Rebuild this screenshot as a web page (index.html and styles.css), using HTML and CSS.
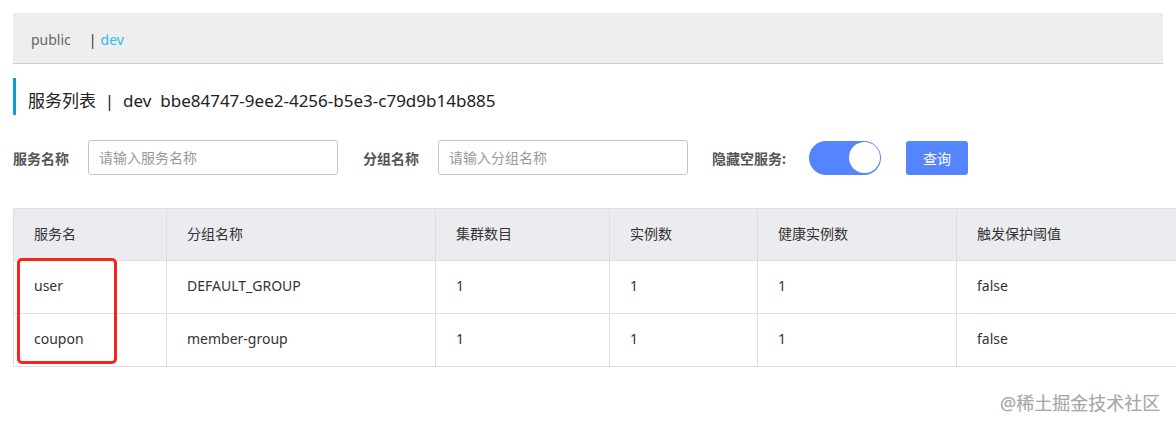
FILE: index.html
```html
<!DOCTYPE html>
<html lang="zh">
<head>
<meta charset="utf-8">
<title>服务列表</title>
<link rel="stylesheet" href="styles.css">
</head>
<body>
<div class="page">
  <div class="ns-bar">
    <span class="ns-item">public</span>
    <span class="ns-sep">|</span>
    <span class="ns-item ns-active">dev</span>
  </div>

  <h1 class="page-title">服务列表 &nbsp;| &nbsp;dev &nbsp;bbe84747-9ee2-4256-b5e3-c79d9b14b885</h1>

  <form class="filter">
    <label class="f-label">服务名称</label>
    <input class="f-input" type="text" placeholder="请输入服务名称">
    <label class="f-label f-gap">分组名称</label>
    <input class="f-input" type="text" placeholder="请输入分组名称">
    <label class="f-label f-gap f-switch-label">隐藏空服务:</label>
    <span class="switch"><span class="knob"></span></span>
    <button class="btn" type="button">查询</button>
  </form>

  <div class="table-wrap">
    <table class="grid">
      <colgroup>
        <col class="c1"><col class="c2"><col class="c3"><col class="c4"><col class="c5"><col class="c6">
      </colgroup>
      <thead>
        <tr><th>服务名</th><th>分组名称</th><th>集群数目</th><th>实例数</th><th>健康实例数</th><th>触发保护阈值</th></tr>
      </thead>
      <tbody>
        <tr><td>user</td><td>DEFAULT_GROUP</td><td>1</td><td>1</td><td>1</td><td>false</td></tr>
        <tr><td>coupon</td><td>member-group</td><td>1</td><td>1</td><td>1</td><td>false</td></tr>
      </tbody>
    </table>
    <div class="highlight"></div>
  </div>
</div>
<div class="watermark">@稀土掘金技术社区</div>
</body>
</html>
```

FILE: styles.css
```css
html, body {
  margin: 0;
  padding: 0;
  background: #fff;
  overflow: hidden;
}
body {
  font-family: "Noto Sans", "Noto Sans CJK SC", sans-serif;
  font-size: 14px;
  color: #333;
  width: 1176px;
  height: 428px;
  position: relative;
}
.page {
  padding: 13px 0 0 13px;
  width: 1300px;
}
.ns-bar {
  height: 50px;
  background: #eeeeee;
  border-bottom: 1px solid #cfcfcf;
  display: flex;
  align-items: center;
  padding-left: 18px;
  padding-top: 3px;
  box-sizing: border-box;
  height: 51px;
  width: 1150px;
}
.ns-item {
  color: #666;
  font-size: 14px;
}
.ns-sep {
  color: #333;
  margin-left: 18px;
  margin-right: 4px;
}
.ns-active {
  color: #2ebde6;
}
.page-title {
  margin: 14px 0 0 0;
  height: 37px;
  border-left: 3px solid #0e9bd4;
  padding-left: 12px;
  font-size: 17px;
  font-weight: normal;
  color: #222;
  display: flex;
  align-items: center;
  padding-top: 6px;
  box-sizing: border-box;
}
.filter {
  margin: 25px 0 0 0;
  display: flex;
  align-items: center;
  height: 35px;
}
.f-label {
  font-weight: bold;
  color: #555;
  font-size: 14px;
  margin-right: 19px;
}
.f-gap {
  margin-left: 25px;
}
.f-switch-label {
  margin-left: 24px;
  margin-right: 23px;
}
.f-input {
  width: 250px;
  height: 35px;
  box-sizing: border-box;
  border: 1px solid #c4c6cf;
  border-radius: 3px;
  padding: 0 10px;
  font-family: inherit;
  font-size: 14px;
  color: #333;
  outline: none;
}
.f-input::placeholder {
  color: #999;
}
.switch {
  width: 72px;
  height: 34px;
  border-radius: 17px;
  background: #5584ff;
  display: flex;
  align-items: center;
  justify-content: flex-end;
  padding-right: 1px;
  box-sizing: border-box;
}
.knob {
  width: 31px;
  height: 31px;
  border-radius: 50%;
  background: #fff;
}
.btn {
  margin-left: 25px;
  width: 62px;
  height: 34px;
  border: none;
  border-radius: 3px;
  background: #5584ff;
  color: #fff;
  font-family: inherit;
  font-size: 14px;
}
.table-wrap {
  margin-top: 33px;
  position: relative;
}
.grid {
  border-collapse: collapse;
  table-layout: fixed;
  width: 1203px;
  border: 1px solid #dcdee3;
}
.c1 { width: 153px; }
.c2 { width: 269px; }
.c3 { width: 174px; }
.c4 { width: 148px; }
.c5 { width: 199px; }
.c6 { width: 260px; }
.grid th, .grid td {
  border: 1px solid #dcdee3;
  text-align: left;
  padding: 0 0 3px 20px;
  font-weight: normal;
  color: #333;
  font-size: 14px;
}
.grid th {
  background: #ebecf0;
  height: 48px;
}
.grid td {
  height: 49px;
}
.highlight {
  position: absolute;
  left: 4px;
  top: 50px;
  width: 100px;
  height: 106px;
  box-sizing: border-box;
  border: 3px solid #f7231c;
  border-radius: 5px;
}
.watermark {
  position: absolute;
  left: 1000px;
  top: 389px;
  font-size: 18px;
  color: #a8a8a8;
  text-shadow: 0 0 1px #ddd;
}
```
